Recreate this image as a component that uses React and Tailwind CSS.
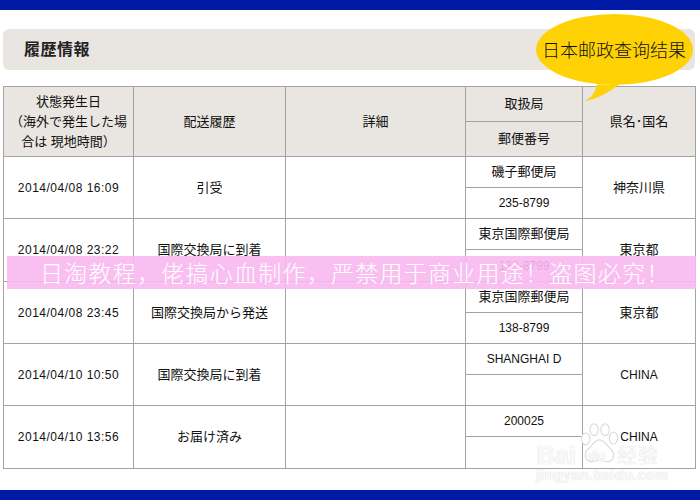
import React from "react";

const rows = [
  ["2014/04/08 16:09", "引受", "磯子郵便局", "235-8799", "神奈川県", 62, false, false],
  ["2014/04/08 23:22", "国際交換局に到着", "東京国際郵便局", "132-8799", "東京都", 63, false, false],
  ["2014/04/08 23:45", "国際交換局から発送", "東京国際郵便局", "138-8799", "東京都", 62, false, false],
  ["2014/04/10 10:50", "国際交換局に到着", "SHANGHAI D", "", "CHINA", 62, true, true],
  ["2014/04/10 13:56", "お届け済み", "200025", "", "CHINA", 63, true, true],
];

const cell = "border border-[#a3a3a3] text-center align-middle p-0";
const head = cell + " bg-[#e9e5e1] text-[13px] font-normal";
const cjk = " text-[13px]";
const latin = " text-[12px]";

function BaiduMark() {
  return (
    <div className="absolute left-[536px] top-[423px] w-[164px] h-[62px] pointer-events-none text-white/90 [text-shadow:0_0_1px_#c4c4c4]">
      <svg className="absolute left-[44px] top-0" width="40" height="42" viewBox="8 0 46 50" fill="#ffffff" stroke="#dcdcdc" strokeWidth="1.4">
        <ellipse cx="14" cy="19" rx="5" ry="7" />
        <ellipse cx="24" cy="8" rx="5" ry="7" />
        <ellipse cx="37" cy="8" rx="5" ry="7" />
        <ellipse cx="47" cy="18" rx="5" ry="7" />
        <path d="M30 20c-6 0-8 7-13 11-5 4-5 14 3 15 4 0 7-2 10-2s7 2 11 2c7-1 8-10 3-15-5-4-8-11-14-11z" />
      </svg>
      <span className="absolute left-[1px] top-[20px] text-[25px] leading-[24px] font-bold font-['Liberation_Sans',sans-serif]">Bai</span>
      <span className="absolute left-[52px] top-[25px] text-[14px] leading-[16px] font-bold font-['Liberation_Sans',sans-serif]">du</span>
      <span className="absolute left-[81px] top-[18px] text-[20px] leading-[28px] tracking-[1px] font-['Noto_Sans_CJK_SC',sans-serif]">经验</span>
      <span className="absolute left-0 top-[44px] text-[14.5px] leading-[17px] tracking-[0.3px] font-bold font-['Liberation_Sans',sans-serif]">jingyan.baidu.com</span>
    </div>
  );
}

export default function App() {
  return (
    <div className="relative w-[700px] h-[500px] bg-white overflow-hidden flex flex-col text-[12px] text-[#111] font-['Liberation_Sans','Noto_Sans_CJK_JP',sans-serif]">
      <div className="h-[10px] bg-[#001aa6] shrink-0" />
      <div className="pt-[19px] pl-[3px] pr-[5px]">
        <div className="h-[41px] rounded-[6px] bg-[#e9e5e1] flex items-center pl-[21px] text-[16px] tracking-[0.5px] font-bold text-[#222]">履歴情報</div>
      </div>
      <div className="pt-[16px] pl-[3px]">
        <table className="table-fixed border-collapse w-[692px]">
          <colgroup>
            <col className="w-[130px]" />
            <col className="w-[152px]" />
            <col className="w-[180px]" />
            <col className="w-[117px]" />
            <col className="w-[113px]" />
          </colgroup>
          <thead>
            <tr className="h-[35px]">
              <th rowSpan={2} className={head + " leading-[20px] px-[6px]"}>状態発生日<br />（海外で発生した場合は 現地時間）</th>
              <th rowSpan={2} className={head}>配送履歴</th>
              <th rowSpan={2} className={head}>詳細</th>
              <th className={head}>取扱局</th>
              <th rowSpan={2} className={head}>県名･国名</th>
            </tr>
            <tr className="h-[35px]">
              <th className={head}>郵便番号</th>
            </tr>
          </thead>
          <tbody>
            {rows.map((r, i) => {
              const top = Math.floor(r[5] / 2);
              return (
                <React.Fragment key={i}>
                  <tr style={{ height: top }}>
                    <td rowSpan={2} className={cell + " tracking-[0.5px]"}>{r[0]}</td>
                    <td rowSpan={2} className={cell + cjk}>{r[1]}</td>
                    <td rowSpan={2} className={cell}></td>
                    <td className={cell + (r[6] ? latin : cjk)}>{r[2]}</td>
                    <td rowSpan={2} className={cell + (r[7] ? latin : cjk)}>{r[4]}</td>
                  </tr>
                  <tr style={{ height: r[5] - top }}>
                    <td className={cell}>{r[3]}</td>
                  </tr>
                </React.Fragment>
              );
            })}
          </tbody>
        </table>
      </div>
      <div className="mt-auto h-[10px] bg-[#001aa6] shrink-0" />

      {/* watermark band */}
      <div className="absolute left-[7px] top-[256px] w-[689px] h-[33px] bg-[#f9b8f0]/90 flex items-center pl-[33px] text-white text-[23px] leading-none tracking-[1.25px] whitespace-nowrap font-light font-['Noto_Sans_CJK_SC',sans-serif]">
        日淘教程，佬搞心血制作，严禁用于商业用途！盗图必究！
      </div>

      {/* speech bubble */}
      <svg className="absolute left-[530px] top-[10px]" width="170" height="96" viewBox="0 0 170 96">
        <path d="M52 91.5c7-1 13-7 15-17h22c-10 8-22 15-37 17z" fill="#ffd205" />
        <ellipse cx="84.5" cy="39.5" rx="78.5" ry="35.5" fill="#ffd205" />
      </svg>
      <div className="absolute left-[542px] top-[36px] text-[18px] leading-[26px] text-[#111] font-light whitespace-nowrap font-['Noto_Sans_CJK_SC',sans-serif]">日本邮政查询结果</div>

      <BaiduMark />
    </div>
  );
}
